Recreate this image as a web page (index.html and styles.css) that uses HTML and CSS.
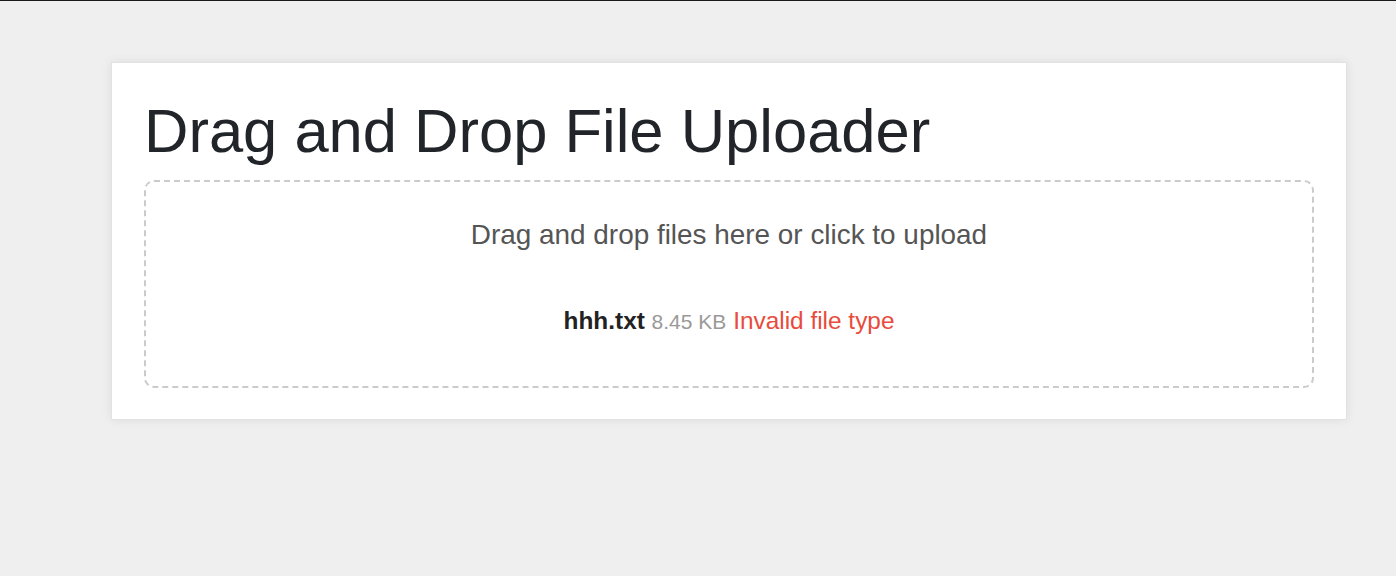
FILE: index.html
```html
<!DOCTYPE html>
<html lang="en">
<head>
<meta charset="utf-8">
<title>Drag and Drop File Uploader</title>
<link rel="stylesheet" href="styles.css">
</head>
<body>
<div class="topline"></div>
<main class="card">
  <h1 class="title">Drag and Drop File Uploader</h1>
  <div class="dropzone">
    <p class="hint">Drag and drop files here or click to upload</p>
    <div class="file-list">
      <div class="file-item">
        <span class="file-name">hhh.txt</span>
        <span class="file-size">8.45 KB</span>
        <span class="file-error">Invalid file type</span>
      </div>
    </div>
  </div>
</main>
</body>
</html>
```
FILE: styles.css
```css
html, body {
  margin: 0;
  padding: 0;
}
body {
  background: #efefef;
  font-family: "Liberation Sans", Arial, sans-serif;
  min-height: 576px;
}
.topline {
  height: 1px;
  background: #1a1a1a;
}
.card {
  margin: 61px 0 0 111px;
  width: 1236px;
  box-sizing: border-box;
  background: #ffffff;
  border: 1px solid #e2e2e2;
  box-shadow: 0 0 10px rgba(0, 0, 0, 0.08);
  padding: 31px 32px 31px 32px;
}
.title {
  margin: 0 0 13px 0;
  font-size: 61.5px;
  line-height: 73px;
  font-weight: 400;
  color: #212529;
}
.dropzone {
  border: 2px dashed #cbcbcb;
  border-radius: 10px;
  padding: 32px 20px 46px;
  text-align: center;
}
.hint {
  margin: 0;
  font-size: 27.9px;
  line-height: 42px;
  color: #555555;
}
.file-list {
  margin-top: 47px;
}
.file-item {
  font-size: 24.4px;
  line-height: 36px;
}
.file-name {
  font-weight: 700;
  color: #222222;
}
.file-size {
  font-size: 21px;
  color: #999999;
}
.file-error {
  color: #e74c3c;
}
```
